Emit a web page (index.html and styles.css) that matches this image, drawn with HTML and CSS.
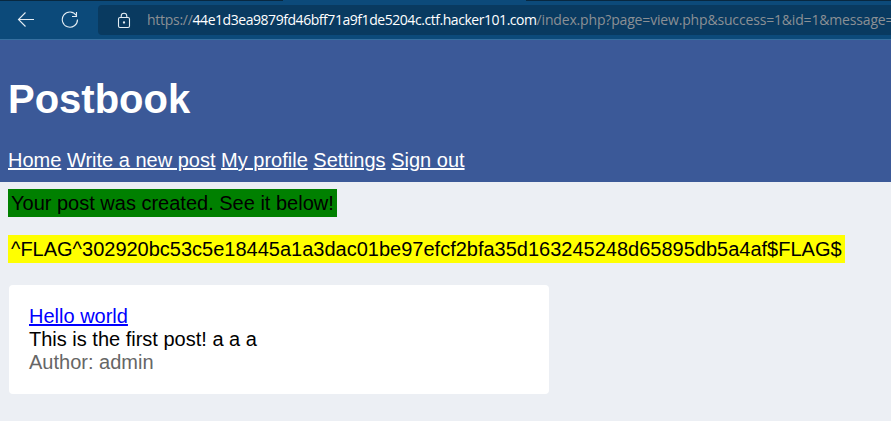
FILE: index.html
```html
<!DOCTYPE html>
<html lang="en">
<head>
<meta charset="utf-8">
<title>Postbook</title>
<link rel="stylesheet" href="styles.css">
</head>
<body>
<div class="toolbar">
  <div class="tabs"><span class="tab-edge"></span><span class="active-tab"></span><span class="tab-edge tab-rest"></span></div>
  <div class="controls">
    <svg class="back" width="18" height="18" viewBox="0 0 18 18"><path d="M17 8.5H1.5M8.5 1.5L1.5 8.5L8.5 15.5"/></svg>
    <svg class="reload" width="18" height="18" viewBox="0 0 18 18"><path d="M15.3 4.5A7.6 7.6 0 1 0 16.5 8.5M15.5 1V5.5H11"/></svg>
    <div class="address">
      <svg class="lock" width="14" height="17" viewBox="0 0 14 17"><rect x="1.5" y="5.5" width="11" height="10" rx="1.5"/><path d="M4.2 5.5V4a2.8 2.8 0 0 1 5.6 0V5.5"/><circle cx="7" cy="10.5" r=".6"/></svg>
      <div class="url"><span class="scheme">https://</span><span class="host">44e1d3ea9879fd46bff71a9f1de5204c.ctf.hacker101.com</span><span class="path">/index.php?page=view.php&amp;success=1&amp;id=1&amp;message=</span></div>
    </div>
  </div>
</div>
<header>
  <h1>Postbook</h1>
  <nav><a href="#">Home</a> <a href="#">Write a new post</a> <a href="#">My profile</a> <a href="#">Settings</a> <a href="#">Sign out</a></nav>
</header>
<main>
  <div class="notice created">Your post was created. See it below!</div>
  <div class="notice flag">^FLAG^302920bc53c5e18445a1a3dac01be97efcf2bfa35d163245248d65895db5a4af$FLAG$</div>
  <article class="post">
    <a href="#">Hello world</a>
    <div>This is the first post! a a a</div>
    <div class="author">Author: admin</div>
  </article>
</main>
</body>
</html>
```
FILE: styles.css
```css
* { box-sizing: border-box; }
body {
  margin: 0;
  min-height: 421px;
  overflow: hidden;
  background: #eceff4;
  font: 20px/23px "Liberation Sans", Arial, sans-serif;
  color: #000;
}
.toolbar {
  height: 40px;
  background: #0c4a7a;
  border-bottom: 1px solid #3670a0;
}
.tabs { display: flex; height: 1px; }
.tab-edge { width: 283px; background: #082840; }
.active-tab { width: 243px; }
.tab-rest { flex: 1; }
.controls { display: flex; align-items: center; height: 38px; padding-left: 17px; }
svg { display: block; flex: none; fill: none; stroke: #e4edf4; stroke-width: 1.1; }
.reload { margin-left: 26px; }
.address {
  display: flex;
  align-items: center;
  flex: 1;
  min-width: 0;
  height: 30px;
  margin-left: 19px;
  padding-left: 19px;
  border-radius: 4px 0 0 4px;
  background: #093a60;
  overflow: hidden;
}
.url {
  display: flex;
  margin-left: 16px;
  font: 14px/20px "Open Sans", "Noto Sans", sans-serif;
  color: #8b9095;
  white-space: nowrap;
}
.url span { flex: none; }
.scheme { letter-spacing: -0.28px; }
.host { color: #fff; letter-spacing: -0.45px; }
.path { letter-spacing: -0.17px; }
header { height: 142px; padding: 36px 8px 10px; background: #3b5998; color: #fff; }
h1 { margin: 0 0 27px; font-size: 40px; line-height: 46px; }
header a { color: #fff; }
main { padding: 7px 8px; }
.notice { width: fit-content; height: 28px; padding: 3px; line-height: 22px; white-space: nowrap; }
.created { background: #008000; }
.flag { margin-top: 18px; background: #ff0; }
.post {
  width: 540px;
  height: 109px;
  margin: 22px 0 0 1px;
  padding: 20px;
  border-radius: 4px;
  background: #fff;
}
.post a { display: block; width: fit-content; color: #00f; }
.author { color: #666; }
```
